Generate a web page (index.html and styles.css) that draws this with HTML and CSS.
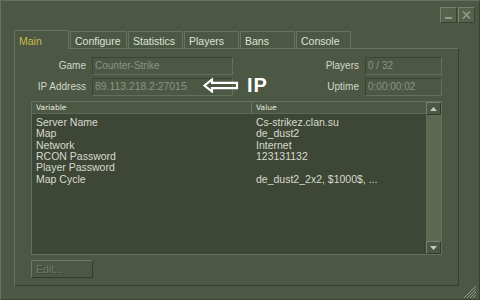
FILE: index.html
```html
<!DOCTYPE html>
<html>
<head>
<meta charset="utf-8">
<link rel="stylesheet" href="styles.css">
</head>
<body>
<div class="window">
  <div class="titlebar">
    <button class="tbtn" aria-label="Minimize">
      <svg width="8" height="8" viewBox="0 0 8 8"><rect x="0" y="6" width="7" height="2" fill="#929c88"/></svg>
    </button>
    <button class="tbtn" aria-label="Close">
      <svg width="9" height="8" viewBox="0 0 9 8"><path d="M1 0.5 L8 7.5 M8 0.5 L1 7.5" stroke="#929c88" stroke-width="1.6" fill="none"/></svg>
    </button>
  </div>
  <div class="tabs">
    <div class="tab active">Main</div>
    <div class="tab wide">Configure</div>
    <div class="tab">Statistics</div>
    <div class="tab">Players</div>
    <div class="tab">Bans</div>
    <div class="tab">Console</div>
  </div>
  <div class="panel">
    <div class="form">
      <span class="lbl">Game</span>
      <div class="field narrow">Counter-Strike</div>
      <span class="lbl">Players</span>
      <div class="field">0 / 32</div>
      <span class="lbl">IP Address</span>
      <div class="field ip">89.113.218.2:27015</div>
      <span class="lbl">Uptime</span>
      <div class="field">0:00:00:02</div>
    </div>
    <div class="annot">
      <svg width="36" height="15" viewBox="0 0 36 15"><polygon points="1.5,7.5 9,1.5 9,4.8 34,4.8 34,10.2 9,10.2 9,13.5" fill="none" stroke="#ffffff" stroke-width="2.2" stroke-linejoin="miter"/></svg>
      <span class="annot-text">IP</span>
    </div>
    <div class="list">
      <div class="list-main">
        <div class="list-head">
          <span class="hcell">Variable</span>
          <span class="hcell">Value</span>
        </div>
        <div class="rows">
          <div class="row"><span>Server Name</span><span>Cs-strikez.clan.su</span></div>
          <div class="row"><span>Map</span><span>de_dust2</span></div>
          <div class="row"><span>Network</span><span>Internet</span></div>
          <div class="row"><span>RCON Password</span><span>123131132</span></div>
          <div class="row"><span>Player Password</span><span></span></div>
          <div class="row"><span>Map Cycle</span><span>de_dust2_2x2, $1000$, ...</span></div>
        </div>
      </div>
      <div class="scrollbar">
        <div class="sb-btn"><svg width="7" height="4" viewBox="0 0 7 4"><polygon points="3.5,0 7,4 0,4" fill="#c4ccbb"/></svg></div>
        <div class="sb-track"></div>
        <div class="sb-btn"><svg width="7" height="4" viewBox="0 0 7 4"><polygon points="0,0 7,0 3.5,4" fill="#c4ccbb"/></svg></div>
      </div>
    </div>
    <div class="actions">
      <button class="btn" disabled>Edit...</button>
    </div>
  </div>
  <div class="grip">
    <svg width="14" height="12" viewBox="0 0 14 12">
      <path d="M2 12 L14 0 M5 12 L14 3 M8 12 L14 6 M11 12 L14 9" stroke="#8e9884" stroke-width="1" fill="none"/>
    </svg>
  </div>
</div>
</body>
</html>
```
FILE: styles.css
```css
* { box-sizing: border-box; }
html, body { margin: 0; padding: 0; background: #4c5844; }
body { font-family: "Liberation Sans", Arial, sans-serif; font-size: 10px; color: #d4d9cc; }

.window {
  position: relative;
  width: 480px;
  height: 300px;
  background: #4c5844;
  border-top: 1px solid #67725e;
  border-left: 1px solid #67725e;
  border-right: 1px solid #39412f;
  border-bottom: 1px solid #39412f;
  padding: 0 0 0 13px;
  display: flex;
  flex-direction: column;
}

.titlebar {
  height: 28px;
  flex: none;
  display: flex;
  justify-content: flex-end;
  align-items: flex-start;
  padding: 6px 4px 0 0;
  gap: 1px;
}
.tbtn {
  width: 17px;
  height: 16px;
  padding: 0;
  margin: 0;
  background: #56624c;
  border-top: 1px solid #76826c;
  border-left: 1px solid #76826c;
  border-right: 1px solid #3a4232;
  border-bottom: 1px solid #3a4232;
  display: flex;
  align-items: center;
  justify-content: center;
}

.tabs {
  display: flex;
  align-items: flex-end;
  gap: 1px;
  height: 19px;
  flex: none;
  position: relative;
  z-index: 1;
}
.tab {
  width: 55px;
  height: 17px;
  padding: 3px 0 0 4px;
  border: 1px solid #68735e;
  border-bottom: none;
  background: #4c5844;
  color: #dfe3d7;
  font-size: 10.5px;
  line-height: 12px;
  white-space: nowrap;
}
.tab.wide { width: 57px; }
.tab.active {
  height: 19px;
  margin-bottom: -1px;
  padding-top: 4px;
  color: #c9b94e;
}

.panel {
  width: 445px;
  height: 238px;
  flex: none;
  border-top: 1px solid #68735e;
  border-left: 1px solid #68735e;
  border-right: 1px solid #373f2e;
  border-bottom: 1px solid #373f2e;
  padding: 8px 16px 7px 0;
  position: relative;
  display: flex;
  flex-direction: column;
}

.form {
  display: grid;
  grid-template-columns: 71px 141px 1fr 77px;
  grid-auto-rows: 18px;
  column-gap: 6px;
  row-gap: 3px;
}
.lbl {
  text-align: right;
  line-height: 18px;
  color: #d2d7ca;
  font-size: 10px;
}
.field {
  border-top: 1px solid #3b4433;
  border-left: 1px solid #3b4433;
  border-right: 1px solid #65705b;
  border-bottom: 1px solid #65705b;
  padding: 0 0 0 2px;
  line-height: 16px;
  color: #8b9581;
  font-size: 10px;
}
.field.narrow { font-family: "Liberation Sans Narrow", "Liberation Sans", Arial, sans-serif; font-size: 10px; }
.field.ip { font-size: 10.4px; }

.annot {
  position: absolute;
  left: 188px;
  top: 27px;
  display: flex;
  align-items: center;
  gap: 8px;
}
.annot-text {
  font-family: "Liberation Sans", Arial, sans-serif;
  font-weight: bold;
  font-size: 20px;
  line-height: 18px;
  color: #ffffff;
  letter-spacing: 1px;
}

.list {
  margin: 5px 0 0 16px;
  height: 155px;
  border: 1px solid #65715b;
  display: flex;
  background: #3e4636;
}
.list-main { flex: 1; display: flex; flex-direction: column; }
.list-head {
  height: 12px;
  display: grid;
  grid-template-columns: 219px 1fr;
  background: #4c5844;
  border-bottom: 1px solid #5d6954;
}
.hcell {
  font-family: "DejaVu Sans", sans-serif;
  font-size: 7.5px;
  line-height: 11px;
  padding-left: 4px;
  color: #e6eadf;
  border-left: 1px solid #6c7862;
}
.hcell:first-child { border-left: none; }
.rows { padding-top: 3px; }
.row {
  display: grid;
  grid-template-columns: 219px 1fr;
  height: 11.34px;
  line-height: 11.34px;
  font-size: 10.5px;
  color: #d6dbce;
}
.row span { padding-left: 4px; white-space: nowrap; }
.row span + span { padding-left: 5px; }

.scrollbar {
  width: 15px;
  display: flex;
  flex-direction: column;
  background: #5b6a50;
}
.sb-btn {
  height: 13px;
  background: #4c5844;
  border-top: 1px solid #76826b;
  border-left: 1px solid #76826b;
  border-right: 1px solid #333a2b;
  border-bottom: 1px solid #333a2b;
  display: flex;
  align-items: center;
  justify-content: center;
}
.sb-track { flex: 1; }

.actions { margin: 5px 0 0 16px; }
.btn {
  width: 62px;
  height: 18px;
  padding: 0 0 0 4px;
  text-align: left;
  font-family: "Liberation Sans", Arial, sans-serif;
  font-size: 10.5px;
  background: #4c5844;
  color: #717c67;
  text-shadow: 1px 1px 0 #3c4535;
  border-top: 1px solid #6d7963;
  border-left: 1px solid #6d7963;
  border-right: 1px solid #343c2c;
  border-bottom: 1px solid #343c2c;
}

.grip {
  position: absolute;
  right: 3px;
  bottom: 1px;
  line-height: 0;
}
```
